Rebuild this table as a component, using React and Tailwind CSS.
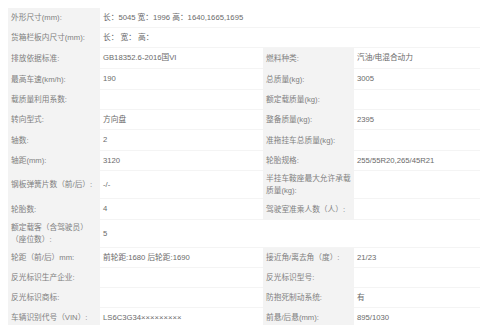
import React from "react";

const rows = [
  { h: 20, l: "外形尺寸(mm):", v: "长：5045 宽：1996 高：1640,1665,1695", full: true },
  { h: 20, l: "货箱栏板内尺寸(mm):", v: "长：  宽：  高：", full: true },
  { h: 21, l: "排放依据标准:", v: "GB18352.6-2016国VI", rl: "燃料种类:", rv: "汽油/电混合动力" },
  { h: 21, l: "最高车速(km/h):", v: "190", rl: "总质量(kg):", rv: "3005" },
  { h: 20, l: "载质量利用系数:", v: "", rl: "额定载质量(kg):", rv: "" },
  { h: 20, l: "转向型式:", v: "方向盘", rl: "整备质量(kg):", rv: "2395" },
  { h: 21, l: "轴数:", v: "2", rl: "准拖挂车总质量(kg):", rv: "" },
  { h: 20, l: "轴距(mm):", v: "3120", rl: "轮胎规格:", rv: "255/55R20,265/45R21" },
  { h: 28, l: "钢板弹簧片数（前/后）:", v: "-/-", rl: "半挂车鞍座最大允许承载质量(kg):", rv: "" },
  { h: 21, l: "轮胎数:", v: "4", rl: "驾驶室准乘人数（人）:", rv: "" },
  { h: 28, l: "额定载客（含驾驶员）（座位数）:", v: "5", noRight: true },
  { h: 20, l: "轮距（前/后）mm:", v: "前轮距:1680 后轮距:1690", rl: "接近角/离去角（度）:", rv: "21/23" },
  { h: 20, l: "反光标识生产企业:", v: "", rl: "反光标识型号:", rv: "" },
  { h: 20, l: "反光标识商标:", v: "", rl: "防抱死制动系统:", rv: "有" },
  { h: 20, l: "车辆识别代号（VIN）:", v: "LS6C3G34×××××××××", rl: "前悬/后悬(mm):", rv: "895/1030" },
];

export default function App() {
  return (
    <div
      className="w-[480px] h-[325px] overflow-hidden bg-white pl-[8px] pt-[8px] text-[7.7px] leading-[12px]"
      style={{ fontFamily: '"Liberation Sans", "Noto Sans CJK SC", sans-serif' }}
    >
      {rows.map((r, i) => (
        <div key={i} className="flex" style={{ height: r.h }}>
          <div className="w-[92px] shrink-0 bg-[#f3f3f3] flex items-center pl-[3px] pr-[2px] text-[#808080]">
            <span>{r.l}</span>
          </div>
          {r.full ? (
            <div className="flex-1 flex items-center px-[3px] border-b border-[#f4f4f4] text-[#6a6a6a]">
              {r.v}
            </div>
          ) : (
            <>
              <div className="w-[163px] shrink-0 flex items-center px-[3px] border-b border-[#f4f4f4] text-[#6a6a6a]">
                {r.v}
              </div>
              {r.noRight ? (
                <div className="flex-1 border-b border-[#f4f4f4]" />
              ) : (
                <>
                  <div className="w-[91px] shrink-0 bg-[#f3f3f3] flex items-center pl-[3px] pr-[2px] text-[#808080]">
                    <span>{r.rl}</span>
                  </div>
                  <div className="flex-1 flex items-center px-[3px] border-b border-[#f4f4f4] text-[#6a6a6a]">
                    {r.rv}
                  </div>
                </>
              )}
            </>
          )}
        </div>
      ))}
    </div>
  );
}
